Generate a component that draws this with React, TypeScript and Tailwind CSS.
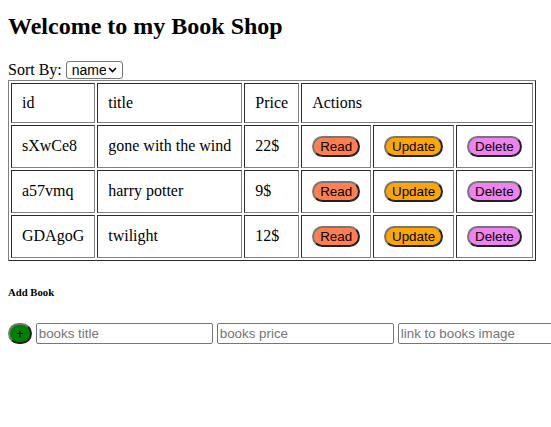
import { useState } from "react";

type Book = { id: string; title: string; price: string };

const books: Book[] = [
  { id: "sXwCe8", title: "gone with the wind", price: "22$" },
  { id: "a57vmq", title: "harry potter", price: "9$" },
  { id: "GDAgoG", title: "twilight", price: "12$" },
];

const cell = "border border-[#808080] [border-style:inset] p-[10px] text-left font-normal align-middle";
const btn =
  "block w-fit border-2 border-[#767676] [border-style:outset] rounded-full px-[6px] py-[1px] font-['Liberation_Sans',Arial,sans-serif] text-[13.33px] leading-[15px] text-black";
const input =
  "shrink-0 w-[177px] h-[21px] border border-[#767676] rounded-[2px] px-[2px] font-['Liberation_Sans',Arial,sans-serif] text-[13.33px] text-black placeholder:text-[#757575] outline-none";

export default function App() {
  const [sort, setSort] = useState("name");

  return (
    <div className="w-[551px] h-[427px] overflow-hidden bg-white px-[8px] font-['Liberation_Serif','Times_New_Roman',serif] text-[16px] leading-[18px] text-black">
      <h2 className="mt-[13px] mb-[20px] text-[24px] leading-[27.6px] font-bold">Welcome to my Book Shop</h2>

      <div className="flex items-center gap-[4px] h-[19px]">
        <span>Sort By:</span>
        <div className="relative self-start">
          <select
            value={sort}
            onChange={(e) => setSort(e.target.value)}
            className="appearance-none block w-[57px] h-[18px] border border-[#767676] rounded-[3px] pl-[5px] pr-[16px] py-0 font-['Liberation_Sans',Arial,sans-serif] text-[14px] leading-[16px] text-black"
          >
            <option value="name">name</option>
            <option value="price">price</option>
          </select>
          <svg className="absolute right-[6px] top-[6px] pointer-events-none" width="9" height="6" viewBox="0 0 9 6">
            <path d="M1 1 L4.5 4.5 L8 1" fill="none" stroke="black" strokeWidth="1.6" />
          </svg>
        </div>
      </div>

      <table className="border-separate border-spacing-[2px] border border-[#808080] [border-style:outset]">
        <thead>
          <tr>
            <th className={cell}>id</th>
            <th className={cell}>title</th>
            <th className={cell}>Price</th>
            <th className={cell} colSpan={3}>Actions</th>
          </tr>
        </thead>
        <tbody>
          {books.map((b) => (
            <tr key={b.id}>
              <td className={cell}>{b.id}</td>
              <td className={cell}>{b.title}</td>
              <td className={cell}>{b.price}</td>
              <td className={cell}>
                <button className={`${btn} bg-[#ff7f50]`}>Read</button>
              </td>
              <td className={cell}>
                <button className={`${btn} bg-[#ffa500]`}>Update</button>
              </td>
              <td className={cell}>
                <button className={`${btn} bg-[#ee82ee]`}>Delete</button>
              </td>
            </tr>
          ))}
        </tbody>
      </table>

      <h6 className="mt-[25px] mb-[25px] text-[10.72px] leading-[12.3px] font-bold">Add Book</h6>

      <div className="flex items-center gap-[4px]">
        <button className={`${btn} shrink-0 bg-[#008000]`}>+</button>
        <input className={input} placeholder="books title" />
        <input className={input} placeholder="books price" />
        <input className={input} placeholder="link to books image" />
      </div>
    </div>
  );
}
